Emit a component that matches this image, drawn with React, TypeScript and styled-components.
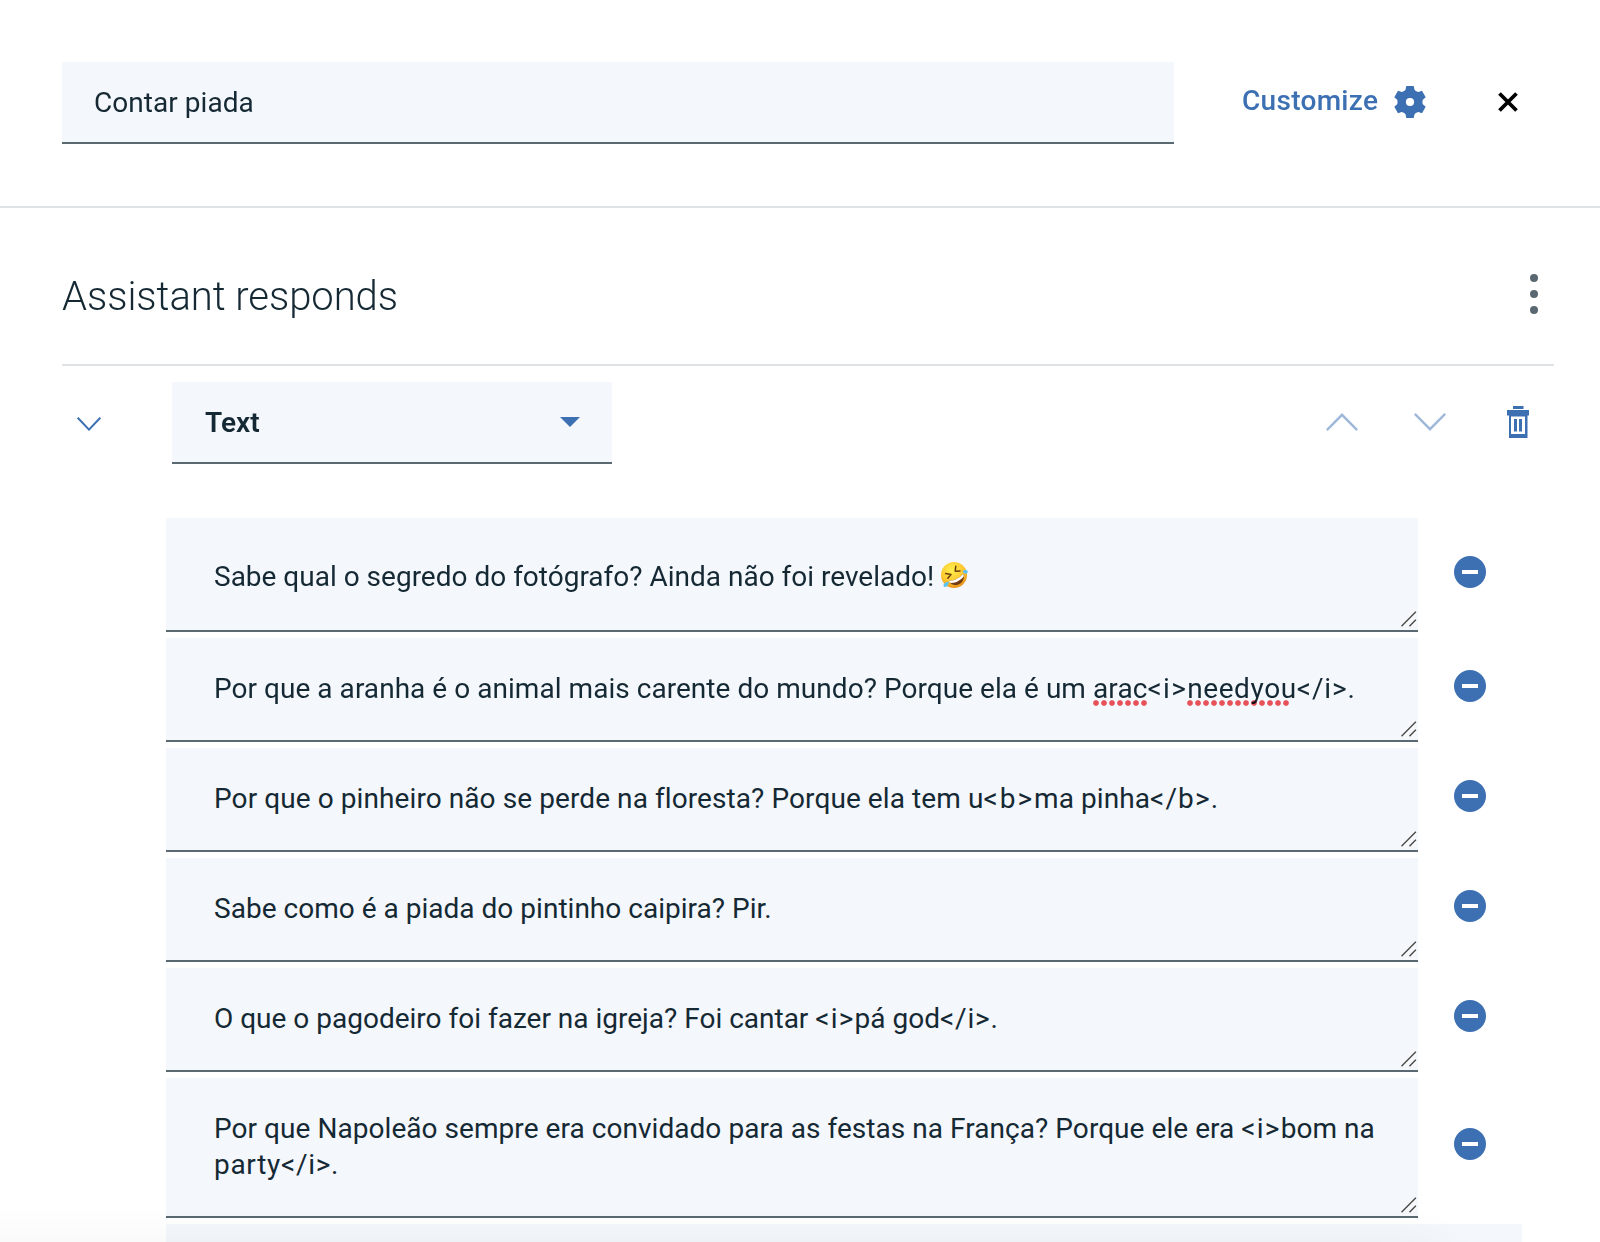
import React from 'react';
import styled, { createGlobalStyle } from 'styled-components';

const color = {
  ink: '#152934',
  brand: '#3d70b2',
  brandSoft: '#9eb8d9',
  field: '#f4f7fb',
  rule: '#dfe3e6',
  underline: '#5a6872',
};

const GlobalStyle = createGlobalStyle`
  * { box-sizing: border-box; }
  body { margin: 0; background: #fff; overflow: hidden; }
`;

const Panel = styled.main`
  position: relative;
  width: 1600px;
  height: 1242px;
  overflow: hidden;
  display: flex;
  flex-direction: column;
  background: #fff;
  color: ${color.ink};
  font-family: Roboto, 'Liberation Sans', sans-serif;
  font-size: 28px;
`;

const Header = styled.header`
  flex: none;
  display: flex;
  align-items: flex-start;
  height: 208px;
  padding: 62px 76px 0 62px;
  border-bottom: 2px solid ${color.rule};
`;

const NameInput = styled.input`
  width: 1112px;
  height: 82px;
  padding: 0 32px;
  border: 0;
  border-bottom: 2px solid ${color.underline};
  border-radius: 0;
  outline: none;
  background: ${color.field};
  color: inherit;
  font: inherit;
  letter-spacing: 0.05px;
`;

const IconButton = styled.button`
  display: flex;
  align-items: center;
  justify-content: center;
  flex: none;
  padding: 0;
  border: 0;
  background: none;
`;

const CustomizeButton = styled(IconButton)`
  height: 80px;
  margin-left: 68px;
  gap: 14px;
  color: ${color.brand};
  font: inherit;
  font-weight: 500;
  letter-spacing: 0.3px;
`;

const ButtonLabel = styled.span`
  width: 138px;
  text-align: left;
  padding-bottom: 3px;
`;

const CloseButton = styled(IconButton)`
  width: 32px;
  height: 80px;
  margin-left: auto;
`;

const Section = styled.section`
  flex: none;
  display: flex;
  flex-direction: column;
  padding: 0 46px 0 62px;
`;

const SectionHeader = styled.div`
  display: flex;
  align-items: center;
  justify-content: space-between;
  height: 158px;
  padding: 16px 8px 0 0;
  border-bottom: 2px solid ${color.rule};
`;

const Title = styled.h2`
  margin: 0;
  padding-top: 6px;
  font-size: 40px;
  font-weight: 300;
  line-height: 48px;
  letter-spacing: -0.05px;
`;

const TypeRow = styled.div`
  display: flex;
  align-items: center;
  height: 82px;
  margin-top: 16px;
  padding-right: 20px;
`;

const CollapseButton = styled(IconButton)`
  width: 54px;
  margin-right: 56px;
  padding-top: 2px;
`;

const TypeSelect = styled.button`
  display: flex;
  align-items: center;
  justify-content: space-between;
  width: 440px;
  height: 82px;
  padding: 0 32px 0 33px;
  border: 0;
  border-bottom: 2px solid ${color.underline};
  background: ${color.field};
  color: inherit;
  font: inherit;
  font-weight: 600;
`;

const RowActions = styled.div`
  display: flex;
  align-items: center;
  gap: 56px;
  margin-left: auto;
  padding-bottom: 2px;
`;

const ResponseList = styled.div`
  display: flex;
  flex-direction: column;
  gap: 6px;
  margin: 54px 0 0 104px;
`;

const ResponseRow = styled.div`
  display: flex;
  align-items: center;
  gap: 36px;
`;

const ResponseField = styled.div<{ $tall?: boolean }>`
  position: relative;
  width: 1252px;
  padding: ${(p) => (p.$tall ? '41px 36px 35px 48px' : '33px 36px 33px 48px')};
  border-bottom: 2px solid ${color.underline};
  background: ${color.field};
  line-height: 36px;
`;

const Line = styled.div<{ $track: number }>`
  height: 36px;
  white-space: pre;
  letter-spacing: ${(p) => p.$track}px;
`;

const Run = styled.span<{ $track: number }>`
  letter-spacing: ${(p) => p.$track}px;
`;

const Misspelled = styled(Run)<{ $dots: number }>`
  position: relative;

  &::after {
    content: '';
    position: absolute;
    left: 0;
    bottom: -1px;
    width: ${(p) => p.$dots * 8}px;
    height: 6px;
    background: radial-gradient(circle at 3px 3px, #f2545b 2.2px, #f7898d 2.7px, transparent 3.2px) left top / 8px 6px repeat-x;
    mix-blend-mode: multiply;
  }
`;

const ResizeHandle = styled.svg`
  position: absolute;
  right: 1px;
  bottom: 3px;
  display: block;
`;

const Emoji = styled.svg`
  display: inline-block;
  margin-left: -1px;
  vertical-align: -3px;
`;

const RemoveButton = styled(IconButton)<{ $tall?: boolean }>`
  margin-bottom: ${(p) => (p.$tall ? 6 : 8)}px;
`;

const NewResponse = styled.div`
  width: 1356px;
  height: 104px;
  background: ${color.field};
`;

const BottomShadow = styled.div`
  position: absolute;
  left: -60px;
  top: 1252px;
  width: 1500px;
  height: 80px;
  box-shadow: 0 0 56px rgba(0, 0, 0, 0.065);
  pointer-events: none;
`;

const GearIcon = () => (
  <svg width="32" height="32" viewBox="-16 -16 32 32" fill={color.brand}>
    <circle r="11.4" />
    {[0, 60, 120, 180, 240, 300].map((a) => (
      <path key={a} d="M-3.7-16H3.7L4.5-12.2 6.8-10V-6H-6.8V-10L-4.5-12.2Z" transform={`rotate(${a})`} />
    ))}
    <circle r="4.1" fill="#fff" />
  </svg>
);

const CloseIcon = () => (
  <svg width="20" height="20" viewBox="0 0 20 20" stroke="#000" strokeWidth="3.8" fill="none">
    <path d="M1.5 1.5 18.5 18.5M18.5 1.5 1.5 18.5" />
  </svg>
);

const DotsIcon = () => (
  <svg width="24" height="40" viewBox="0 0 24 40" fill={color.underline}>
    <circle cx="12" cy="4" r="4" />
    <circle cx="12" cy="20" r="4" />
    <circle cx="12" cy="36" r="4" />
  </svg>
);

const ChevronIcon = ({ up = false }: { up?: boolean }) => (
  <svg width="32" height="18" viewBox="0 0 32 18" fill="none" stroke={color.brandSoft} strokeWidth="2.4">
    <path d={up ? 'M.8 17.1 16 1.8 31.2 17.1' : 'M.8.9 16 16.2 31.2.9'} />
  </svg>
);

const CollapseIcon = () => (
  <svg width="24" height="14" viewBox="0 0 24 14" fill="none" stroke={color.brand} strokeWidth="2">
    <path d="M.7.7 12 12.6 23.3.7" />
  </svg>
);

const CaretIcon = () => (
  <svg width="20" height="10" viewBox="0 0 20 10" fill={color.brand}>
    <path d="M0 0h20L10 10z" />
  </svg>
);

const TrashIcon = () => (
  <svg width="32" height="32" viewBox="0 0 32 32" fill={color.brand}>
    <path d="M11 0h10.5v3H11zM5 4h22v5.5H5z" />
    <path fillRule="evenodd" d="M7 9h18.500v23H7zM9 10.500v17.500h14V10.500z" />
    <path d="M12 13h3v12.500H12zM17 13h3v12.500h-3z" />
  </svg>
);

const RemoveIcon = () => (
  <svg width="32" height="32" viewBox="0 0 32 32">
    <circle cx="16" cy="16" r="16" fill={color.brand} />
    <path d="M8 14h16v4H8z" fill="#fff" />
  </svg>
);

const Grip = () => (
  <ResizeHandle width="16" height="16" viewBox="0 0 16 16" fill="none" strokeWidth="1.5">
    <path d="M1.500 16 16 1.500M9.500 16 16 9.500" stroke="#fff" />
    <path d="M.5 15.200 14.900.8M8.500 15.200 14.900 8.800" stroke="#4c4c4c" />
  </ResizeHandle>
);

const LaughingEmoji = () => (
  <Emoji width="29" height="28" viewBox="0 0 29 28" role="img" aria-label="🤣">
    <defs>
      <radialGradient id="face" cx="0.42" cy="0.3" r="0.75">
        <stop offset="0" stopColor="#fff04f" />
        <stop offset="0.6" stopColor="#fdc62f" />
        <stop offset="1" stopColor="#e58a16" />
      </radialGradient>
    </defs>
    <circle cx="14" cy="14" r="13" fill="url(#face)" />
    <g fill="none" stroke="#6b3f0c" strokeWidth="1.5" strokeLinecap="round" strokeLinejoin="round">
      <path d="M5.600 12.600 11 13.400 7.800 17.300" />
      <path d="M15.800 5.200 15.200 10.200 20 10" />
    </g>
    <path d="M8.800 19.800C14 20.300 20.500 16.800 23.200 12.600 25.200 17.500 22.200 22.600 18 23.800 13.800 25 10.200 23.200 8.800 19.800Z" fill="#713b13" />
    <path d="M8.800 19.800C14 20.300 20.500 16.800 23.200 12.600L23.800 15.200C20.500 19.600 15 22.500 10 21.800Z" fill="#fff" />
    <path d="M22.800 9.700C24.500 8.500 27.500 8.700 27.800 10.500 28 12.300 25.900 13.300 24.300 12.300 23.300 11.700 22.500 10.500 22.800 9.700Z" fill="#5cc3f2" />
    <path d="M8.600 20.500C9 22.600 8 25.500 5.300 25.900 3.400 26 2.800 24 4.200 22.700 5.500 21.400 7.200 20.700 8.600 20.500Z" fill="#5cc3f2" />
  </Emoji>
);

const responses: { tall?: boolean; body: React.ReactNode }[] = [
  {
    tall: true,
    body: (
      <Line $track={0}>
        Sabe qual o segredo do fotógrafo? Ainda não foi revelado! <LaughingEmoji />
      </Line>
    ),
  },
  {
    body: (
      <Line $track={0.04}>
        Por que a aranha é o animal mais carente do mundo? Porque ela é um <Misspelled $track={0.13} $dots={7}>arac</Misspelled>
        <Run $track={1.3}>{'<i>'}</Run>
        <Misspelled $track={0.6} $dots={13}>needyou</Misspelled>
        <Run $track={0.9}>{'</i>.'}</Run>
      </Line>
    ),
  },
  {
    body: (
      <Line $track={0.085}>
        Por que o pinheiro não se perde na floresta? Porque ela tem u<Run $track={2}>{'<b>'}</Run>ma pinha
        <Run $track={1.1}>{'</b>.'}</Run>
      </Line>
    ),
  },
  { body: <Line $track={0.02}>Sabe como é a piada do pintinho caipira? Pir.</Line> },
  {
    body: (
      <Line $track={0}>
        O que o pagodeiro foi fazer na igreja? Foi cantar <Run $track={1.2}>{'<i>'}</Run>pá god
        <Run $track={0.8}>{'</i>.'}</Run>
      </Line>
    ),
  },
  {
    body: (
      <>
        <Line $track={0.05}>
          Por que Napoleão sempre era convidado para as festas na França? Porque ele era <Run $track={1.2}>{'<i>'}</Run>bom na
        </Line>
        <Line $track={0.7}>{'party</i>.'}</Line>
      </>
    ),
  },
];

export default function App() {
  return (
    <Panel>
      <GlobalStyle />
      <Header>
        <NameInput defaultValue="Contar piada" aria-label="Node name" />
        <CustomizeButton>
          <ButtonLabel>Customize</ButtonLabel>
          <GearIcon />
        </CustomizeButton>
        <CloseButton aria-label="Close">
          <CloseIcon />
        </CloseButton>
      </Header>
      <Section>
        <SectionHeader>
          <Title>Assistant responds</Title>
          <IconButton aria-label="Options">
            <DotsIcon />
          </IconButton>
        </SectionHeader>
        <TypeRow>
          <CollapseButton aria-label="Collapse">
            <CollapseIcon />
          </CollapseButton>
          <TypeSelect>
            Text
            <CaretIcon />
          </TypeSelect>
          <RowActions>
            <IconButton aria-label="Move up">
              <ChevronIcon up />
            </IconButton>
            <IconButton aria-label="Move down">
              <ChevronIcon />
            </IconButton>
            <IconButton aria-label="Delete">
              <TrashIcon />
            </IconButton>
          </RowActions>
        </TypeRow>
        <ResponseList>
          {responses.map((r, i) => (
            <ResponseRow key={i}>
              <ResponseField $tall={r.tall}>
                {r.body}
                <Grip />
              </ResponseField>
              <RemoveButton $tall={r.tall} aria-label="Remove">
                <RemoveIcon />
              </RemoveButton>
            </ResponseRow>
          ))}
          <NewResponse />
        </ResponseList>
      </Section>
      <BottomShadow />
    </Panel>
  );
}
